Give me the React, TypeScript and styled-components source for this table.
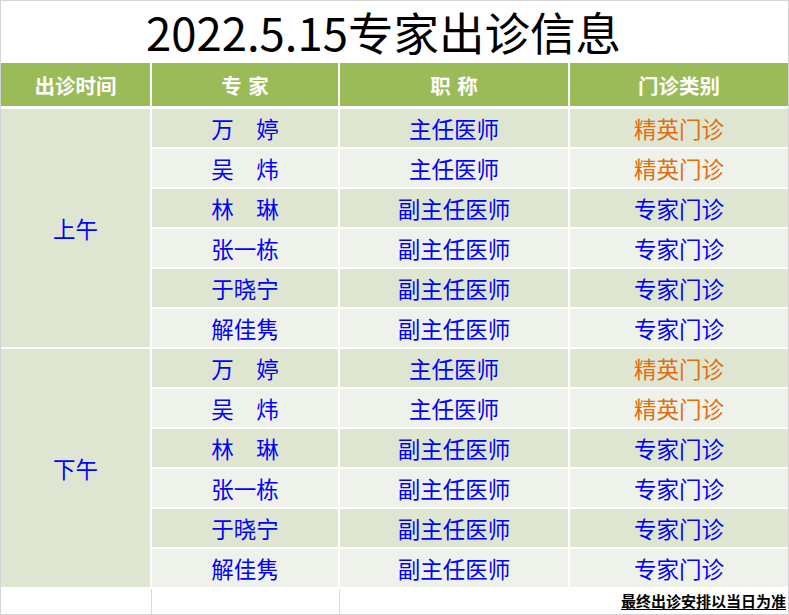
import React from 'react';
import styled, { createGlobalStyle } from 'styled-components';

const GlobalStyle = createGlobalStyle`
	html, body {
		margin: 0;
		padding: 0;
		background: #ffffff;
	}
	body {
		font-family: 'Noto Sans CJK SC', 'Noto Sans', sans-serif;
	}
`;

const StyledSheet = styled.div`
	width: 789px;
	height: 615px;
	box-sizing: border-box;
	border: 1px solid #d4d4d4;
	background: #ffffff;
	display: flex;
	flex-direction: column;
`;

const StyledTitle = styled.div`
	height: 62px;
	display: flex;
	align-items: center;
	justify-content: center;
	padding-right: 22px;
	font-size: 45.5px;
	line-height: 1.3;
	color: #000000;
	overflow: visible;
`;

const StyledGrid = styled.div`
	display: grid;
	grid-template-columns: 149px 186px 228px 1fr;
	grid-template-rows: 44px repeat(12, 38px);
	column-gap: 2px;
	row-gap: 2px;
`;

const StyledHead = styled.div`
	background: #9bbb59;
	color: #ffffff;
	font-weight: 700;
	font-size: 20.5px;
	word-spacing: 2px;
	display: flex;
	align-items: center;
	justify-content: center;
	margin-bottom: 1px;
`;

const StyledCell = styled.div<{ $dark: boolean; $orange?: boolean }>`
	background: ${(p) => (p.$dark ? '#dee6d2' : '#eff2ea')};
	color: ${(p) => (p.$orange ? '#e46c0a' : '#0000ff')};
	font-size: 22.5px;
	display: flex;
	align-items: center;
	justify-content: center;
	white-space: pre;
`;

const StyledPeriod = styled.div<{ $row: number }>`
	grid-column: 1;
	grid-row: ${(p) => p.$row} / span 6;
	background: #dee6d2;
	color: #0000ff;
	font-size: 22.5px;
	display: flex;
	align-items: center;
	justify-content: center;
`;

const StyledFooter = styled.div`
	display: flex;
	flex: 1;
`;

const StyledFooterCell = styled.div<{ $w?: number }>`
	box-sizing: border-box;
	width: ${(p) => (p.$w ? `${p.$w}px` : 'auto')};
	flex: ${(p) => (p.$w ? 'none' : '1')};
	border-right: ${(p) => (p.$w ? '1px solid #dadada' : 'none')};
	margin-top: 2px;
	display: flex;
	align-items: center;
	justify-content: flex-end;
	padding-right: 2px;
	padding-bottom: 1px;
`;

const StyledNote = styled.span`
	font-size: 15px;
	line-height: 1;
	font-weight: 700;
	color: #000000;
	padding-bottom: 1px;
	border-bottom: 1px solid #000000;
`;

type Doctor = {
	name: string;
	title: string;
	kind: string;
};

const doctors: Doctor[] = [
	{ name: '万　婷', title: '主任医师', kind: '精英门诊' },
	{ name: '吴　炜', title: '主任医师', kind: '精英门诊' },
	{ name: '林　琳', title: '副主任医师', kind: '专家门诊' },
	{ name: '张一栋', title: '副主任医师', kind: '专家门诊' },
	{ name: '于晓宁', title: '副主任医师', kind: '专家门诊' },
	{ name: '解佳隽', title: '副主任医师', kind: '专家门诊' },
];

const periods = ['上午', '下午'];

const App: React.FC = () => {
	return (
		<>
			<GlobalStyle />
			<StyledSheet>
				<StyledTitle>2022.5.15专家出诊信息</StyledTitle>
				<StyledGrid>
					<StyledHead>出诊时间</StyledHead>
					<StyledHead>专 家</StyledHead>
					<StyledHead>职 称</StyledHead>
					<StyledHead>门诊类别</StyledHead>
					{periods.map((period, pi) => (
						<React.Fragment key={period}>
							<StyledPeriod $row={2 + pi * 6}>{period}</StyledPeriod>
							{doctors.map((d, i) => {
								const dark = i % 2 === 0;
								const orange = d.kind === '精英门诊';
								return (
									<React.Fragment key={period + d.name}>
										<StyledCell $dark={dark} style={{ gridColumn: 2 }}>
											{d.name}
										</StyledCell>
										<StyledCell $dark={dark}>{d.title}</StyledCell>
										<StyledCell $dark={dark} $orange={orange}>
											{d.kind}
										</StyledCell>
									</React.Fragment>
								);
							})}
						</React.Fragment>
					))}
				</StyledGrid>
				<StyledFooter>
					<StyledFooterCell $w={151} />
					<StyledFooterCell $w={188} />
					<StyledFooterCell>
						<StyledNote>最终出诊安排以当日为准</StyledNote>
					</StyledFooterCell>
				</StyledFooter>
			</StyledSheet>
		</>
	);
};

export default App;
